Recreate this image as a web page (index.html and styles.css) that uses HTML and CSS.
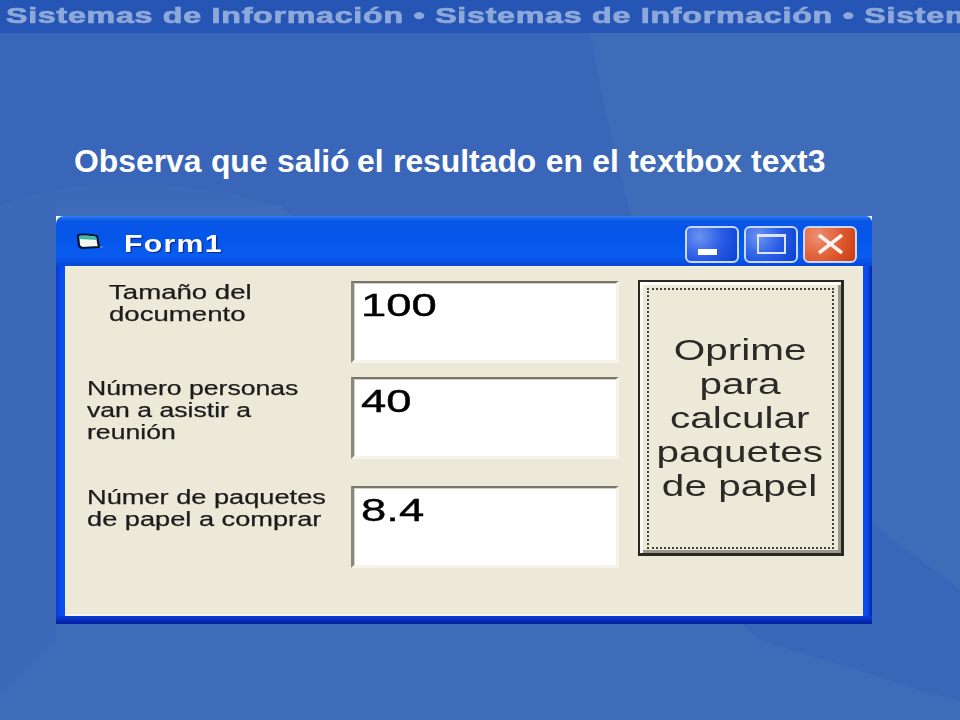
FILE: index.html
```html
<!DOCTYPE html>
<html lang="es">
<head>
<meta charset="utf-8">
<title>Form1</title>
<link rel="stylesheet" href="styles.css">
</head>
<body>
<main class="slide">
  <svg class="backdrop" viewBox="0 0 960 720" aria-hidden="true">
    <path class="shade" d="M0 33 L590 33 C606 120 625 200 650 280 L873 525 L960 590 L960 702 L760 640 L280 205 L0 205 Z"/>
    <path class="shade-soft" d="M0 205 C90 172 190 182 280 205 Z"/>
    <path class="shade-soft" d="M0 205 L56 205 L56 642 L0 697 Z"/>
  </svg>
  <header class="banner"><span class="banner-text">Sistemas de Información • Sistemas de Información • Sistemas</span></header>
  <h1 class="headline">Observa que salió<span class="tight"> el resultado en el textbox text3</span></h1>
  <section class="window">
    <div class="titlebar">
      <svg class="app-icon" viewBox="0 0 28 18" aria-hidden="true">
        <path d="M2 2 C7 1 17 2 21 3 L23 14 L6 15 L3 13 Z" fill="#f4f6ee" stroke="#061030" stroke-width="2.2" stroke-linejoin="round"/>
        <path d="M3 3 C8 2 16 3 20 4 L21 7 L3 6 Z" fill="#3fb8a8"/>
        <path d="M24 13 L28 14 L24 15 Z" fill="#7d8aa8"/>
      </svg>
      <span class="title-text">Form1</span>
      <div class="controls">
        <div class="ctl ctl-blue">
          <span class="glyph-min"></span>
        </div>
        <div class="ctl ctl-blue">
          <span class="glyph-max"></span>
        </div>
        <div class="ctl ctl-red">
          <svg class="glyph-close" viewBox="0 0 27 20" aria-hidden="true"><path d="M2 1 L25 19 M25 1 L2 19"/></svg>
        </div>
      </div>
    </div>
    <div class="client">
      <div class="fields">
        <div class="field field-a">
          <div class="label label-a"><span>Tamaño del</span><span>documento</span></div>
          <div class="textbox"><span>100</span></div>
        </div>
        <div class="field field-b">
          <div class="label label-b"><span>Número personas</span><span>van a asistir a</span><span>reunión</span></div>
          <div class="textbox"><span>40</span></div>
        </div>
        <div class="field field-c">
          <div class="label label-c"><span>Númer de paquetes</span><span>de papel a comprar</span></div>
          <div class="textbox"><span>8.4</span></div>
        </div>
      </div>
      <div class="cmd">
        <div class="focus">
          <span>Oprime</span><span>para</span><span>calcular</span><span>paquetes</span><span>de papel</span>
        </div>
      </div>
    </div>
  </section>
</main>
</body>
</html>
```
FILE: styles.css
```css
* { box-sizing: border-box; }
html, body { margin: 0; padding: 0; }
body { width: 960px; height: 720px; overflow: hidden; background: #3e6cb9; font-family: "Liberation Sans", Arial, sans-serif; }

.slide { position: relative; width: 960px; height: 720px; overflow: hidden; display: flex; flex-direction: column; }
.backdrop { position: absolute; inset: 0; width: 960px; height: 720px; }
.shade { fill: #3966b9; }
.shade-soft { fill: #3c69b8; }

.banner { position: relative; height: 33px; background: #2556b5; overflow: hidden; white-space: nowrap; padding: 3px 0 0 6px; flex: none; filter: blur(.4px); }
.banner-text { display: inline-block; font-weight: 700; font-size: 22px; line-height: 25px; letter-spacing: .5px; color: #8ea8d9; -webkit-text-stroke: .7px #8ea8d9; transform: scaleX(1.463); transform-origin: left center; }

.headline { position: relative; margin: 111px 0 0 74px; font-size: 31.85px; line-height: 34px; font-weight: 700; color: #fff; white-space: nowrap; height: 34px; flex: none; word-spacing: .6px; }
.tight { margin-left: -2px; }

.window { position: relative; margin: 38px 0 0 56px; width: 816px; height: 408px; flex: none; display: flex; flex-direction: column; filter: blur(.4px);
  background: linear-gradient(#fff 0, #fff 8px, transparent 8px), linear-gradient(90deg, #0b3cc4 0, #0a4cf0 5px, #0a4cf0 811px, #0028a8 816px); padding: 0 9px 8px; }
.window::after { content: ""; position: absolute; left: 0; right: 0; bottom: 0; height: 8px; background: linear-gradient(180deg, #0a3bd8, #00209a); }

.titlebar { height: 50px; margin: 0 -9px; flex: none; display: flex; align-items: center; padding: 6px 15px 0 20px; border-radius: 8px 6px 0 0;
  background: linear-gradient(180deg, #2f7cf2 0, #0a55e6 10%, #0456ea 45%, #0a5cf0 80%, #0648d8 100%); }
.app-icon { width: 28px; height: 18px; flex: none; margin-top: -4px; }
.title-text { display: inline-block; margin-left: 20px; font-size: 24px; line-height: 26px; font-weight: 700; color: #fff; text-shadow: 1px 1px 1px #0a2a8a; letter-spacing: 1px; transform: scaleX(1.26); transform-origin: left center; }
.controls { margin-left: auto; display: flex; gap: 5px; }
.ctl { width: 54px; height: 37px; border: 2px solid #c9d9f8; border-radius: 6px; display: flex; align-items: center; justify-content: center; }
.ctl-blue { background: radial-gradient(circle at 25% 25%, #6b92f0 0, #2a5ce6 50%, #0a3fd0 100%); }
.ctl-red { background: radial-gradient(circle at 25% 25%, #ec9072 0, #df5a30 55%, #c83a0c 100%); }
.glyph-min { width: 19px; height: 6px; background: #fff; margin: 15px 10px 0 0; }
.glyph-max { width: 29px; height: 20px; border: 2px solid #dbe6fb; border-top-width: 3px; }
.glyph-close { width: 27px; height: 20px; }
.glyph-close path { stroke: #fbf4ee; stroke-width: 3.5; fill: none; }

.client { flex: 1; background: #ece9d8; display: flex; border-top: 1px solid #f6f4ea; border-bottom: 2px solid #f4f3ea; position: relative; z-index: 1; }
.fields { width: 554px; flex: none; display: flex; flex-direction: column; }
.field { display: flex; justify-content: space-between; padding-left: 22px; }
.field-a { margin-top: 14px; }
.field-b { margin-top: 14px; }
.field-c { margin-top: 27px; }

.label { display: flex; flex-direction: column; font-size: 20px; line-height: 22px; color: #1c1c1c; -webkit-text-stroke: .25px #1c1c1c; }
.label span { display: block; transform: scaleX(1.33); transform-origin: left center; white-space: nowrap; }
.label-a { padding-left: 22px; }
.label-a span { transform: scaleX(1.38); }
.label-c span { transform: scaleX(1.36); }

.textbox { width: 268px; height: 82px; background: #fff; border: solid; border-width: 2px 3px 3px 3px; border-color: #77756a #f6f4ea #f6f4ea #8a887a; padding: 3px 0 0 7px; box-shadow: inset 1px 1px 0 #d5d2c2; flex: none; }
.textbox span { display: inline-block; font-size: 32px; line-height: 38px; color: #000; -webkit-text-stroke: .4px #000; transform: scaleX(1.42); transform-origin: left center; }

.cmd { width: 206px; height: 276px; margin: 13px 0 0 19px; flex: none; border: solid #2a2820; border-width: 2px 3px 3px 2px; padding: 6px 7px 4px 7px; box-shadow: inset 3px 3px 0 #fff, inset -3px -3px 0 #9a9888; }
.focus { height: 100%; border: 2px dotted #45443c; display: flex; flex-direction: column; align-items: center; padding: 43px 1px 0 0; font-size: 30px; line-height: 34px; color: #2a2a26; }
.focus span { display: block; transform: scaleX(1.35); white-space: nowrap; }
```
